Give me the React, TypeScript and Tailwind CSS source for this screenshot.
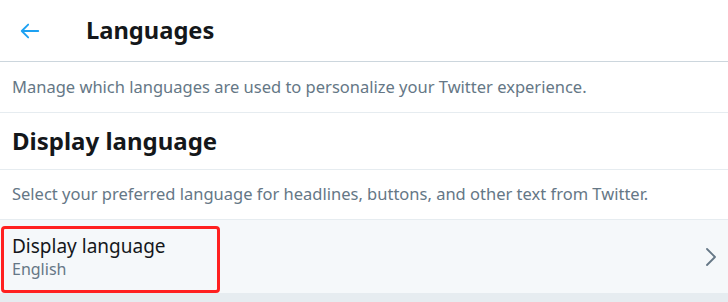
import React from "react";

export default function App() {
  const font = { fontFamily: '"Segoe UI", "Noto Sans", "Open Sans", sans-serif' };
  return (
    <div className="w-[728px] h-[302px] bg-white overflow-hidden" style={font}>
      <div className="h-[62px] flex items-center border-b border-[#ccd6dd]">
        <div className="w-[86px] flex items-center pl-[19px]">
          <svg width="22" height="22" viewBox="0 0 24 24" fill="none" stroke="#1da1f2" strokeWidth="2" strokeLinecap="round" strokeLinejoin="round">
            <path d="M21 12H3M10 5l-7 7 7 7" />
          </svg>
        </div>
        <div className="text-[23.7px] font-bold text-[#14171a] leading-none">Languages</div>
      </div>
      <div className="h-[51px] flex items-center px-[12px] border-b border-[#e6ecf0] text-[16.5px] text-[#657786]">
        Manage which languages are used to personalize your Twitter experience.
      </div>
      <div className="h-[57px] flex items-center px-[12px] border-b border-[#e6ecf0] text-[24px] font-bold text-[#14171a]">
        Display language
      </div>
      <div className="h-[50px] flex items-center px-[12px] border-b border-[#e6ecf0] text-[16.5px] text-[#657786]">
        Select your preferred language for headlines, buttons, and other text from Twitter.
      </div>
      <div className="relative h-[73px] bg-[#f5f8fa] flex items-center justify-between pl-[12px] pr-[11px]">
        <div className="flex flex-col pt-[2px]">
          <span className="text-[19px] text-[#14171a] leading-[24px]">Display language</span>
          <span className="text-[16px] text-[#657786] leading-[23px]">English</span>
        </div>
        <svg width="12" height="20" viewBox="0 0 12 20" fill="none" stroke="#657786" strokeWidth="1.8" strokeLinecap="round" strokeLinejoin="round">
          <path d="M2 2l8 8-8 8" />
        </svg>
        <div className="absolute left-[1px] top-[6px] w-[219px] h-[67px] border-[3px] border-[#ff2020] rounded-[4px] pointer-events-none" />
      </div>
      <div className="h-[10px] bg-[#e6ecf0]" />
    </div>
  );
}
